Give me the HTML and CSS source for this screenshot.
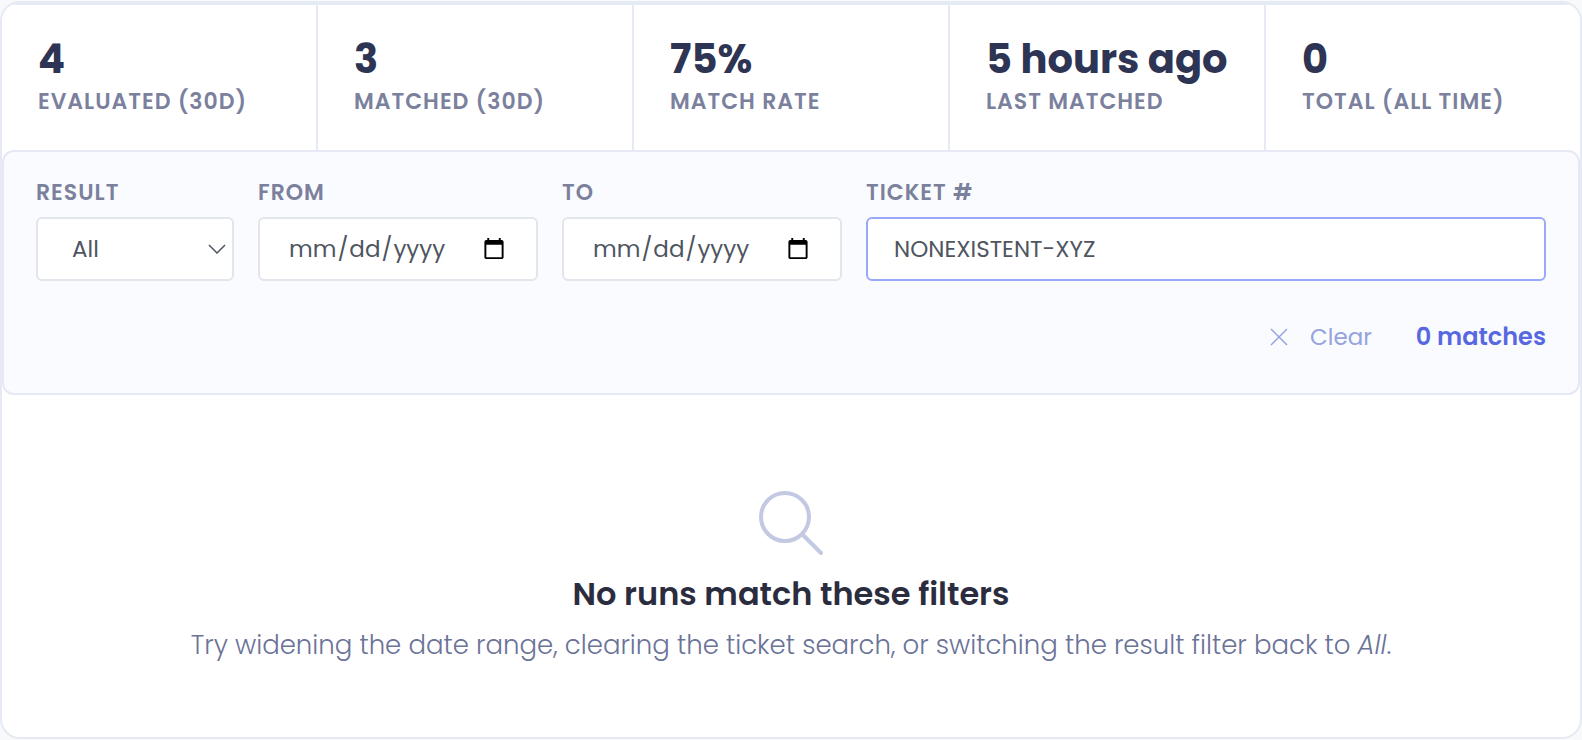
FILE: index.html
```html
<!DOCTYPE html>
<html lang="en">
<head>
<meta charset="utf-8">
<title>Rule runs</title>
<link rel="stylesheet" href="styles.css">
</head>
<body>
<main class="card">
  <dl class="stats">
    <div class="stat"><dd class="stat-value">4</dd><dt class="label">Evaluated (30d)</dt></div>
    <div class="stat"><dd class="stat-value">3</dd><dt class="label">Matched (30d)</dt></div>
    <div class="stat"><dd class="stat-value">75%</dd><dt class="label">Match rate</dt></div>
    <div class="stat"><dd class="stat-value">5 hours ago</dd><dt class="label">Last matched</dt></div>
    <div class="stat"><dd class="stat-value">0</dd><dt class="label">Total (all time)</dt></div>
  </dl>
  <form class="filters">
    <div class="fields">
      <div class="field field-result">
        <label class="label" for="result">Result</label>
        <div class="select-wrap">
          <select class="control select" id="result"><option>All</option><option>Matched</option><option>Not matched</option></select>
          <svg class="chevron" viewBox="0 0 18 10" aria-hidden="true"><path d="M1 1l8 8 8-8"/></svg>
        </div>
      </div>
      <div class="field field-date">
        <label class="label" for="from">From</label>
        <input class="control date" id="from" type="date">
      </div>
      <div class="field field-date">
        <label class="label" for="to">To</label>
        <input class="control date" id="to" type="date">
      </div>
      <div class="field field-ticket">
        <label class="label" for="ticket">Ticket #</label>
        <input class="control ticket" id="ticket" type="text" value="NONEXISTENT-XYZ">
      </div>
    </div>
    <div class="summary">
      <button class="clear" type="button">
        <svg class="clear-icon" viewBox="0 0 18 18" aria-hidden="true"><path d="M1 1l16 16M17 1L1 17"/></svg>
        Clear
      </button>
      <output class="count">0 matches</output>
    </div>
  </form>
  <section class="empty">
    <svg class="empty-icon" viewBox="0 0 64 64" aria-hidden="true"><circle cx="26" cy="26" r="24"/><path d="M43.500 43.500L62 62"/></svg>
    <h2 class="empty-title">No runs match these filters</h2>
    <p class="empty-text">Try widening the date range, clearing the ticket search, or switching the result filter back to <em>All</em>.</p>
  </section>
</main>
</body>
</html>
```
FILE: styles.css
```css
* {
  box-sizing: border-box;
}

body {
  margin: 0;
  padding: 1px 0;
  background: #f8f9fb;
  font-family: Poppins, Inter, "Liberation Sans", sans-serif;
  color: #2b2d42;
}

.card {
  border: 2px solid #e6eaf4;
  border-radius: 20px;
  background: #fff;
  overflow: hidden;
}

.stats {
  display: grid;
  grid-template-columns: repeat(5, 1fr);
  gap: 2px;
  margin: 0;
  padding-top: 2px;
  background: #e6eaf4;
}

.stat {
  display: flex;
  flex-direction: column;
  gap: 4px;
  padding: 32px 0 32px 36px;
  background: #fff;
}

.stat-value {
  margin: 0;
  font-size: 40px;
  line-height: 44px;
  font-weight: 700;
  color: #2d3454;
  white-space: nowrap;
}

.label {
  font-size: 22px;
  line-height: 33px;
  font-weight: 600;
  letter-spacing: 1px;
  text-transform: uppercase;
  white-space: nowrap;
  color: #7b819d;
}

.filters {
  padding: 24px 32px;
  border: 2px solid #e6e8f3;
  border-radius: 12px;
  background: #fafbff;
}

.fields {
  display: flex;
  gap: 24px;
}

.field {
  display: flex;
  flex-direction: column;
  gap: 8px;
  min-width: 0;
}

.field-result {
  flex: 0 0 198px;
}

.field-date {
  flex: 0 0 280px;
}

.field-ticket {
  flex: 1;
}

.control {
  width: 100%;
  height: 64px;
  border: 2px solid #e2e5ec;
  border-radius: 6px;
  background: #fff;
  font: 400 23px Poppins, Inter, "Liberation Sans", sans-serif;
  color: #4f565f;
  outline: none;
}

.select-wrap {
  position: relative;
}

.select {
  appearance: none;
  padding: 0 34px;
}

.chevron {
  position: absolute;
  right: 8px;
  top: 27px;
  width: 18px;
  height: 10px;
  fill: none;
  stroke: #4f565f;
  stroke-width: 1.5;
  pointer-events: none;
}

.date {
  padding: 0 28px;
}

.date::-webkit-calendar-picker-indicator {
  width: 24px;
  height: 24px;
}

.ticket {
  padding: 0 26px;
  border-color: #9aa8fb;
}

.summary {
  display: flex;
  justify-content: flex-end;
  align-items: center;
  gap: 44px;
  padding: 40px 0 16px;
}

.clear {
  display: flex;
  align-items: center;
  gap: 22px;
  padding: 0;
  border: 0;
  background: none;
  font: 400 23px/32px Poppins, Inter, "Liberation Sans", sans-serif;
  color: #96a3de;
}

.clear-icon {
  width: 18px;
  height: 18px;
  fill: none;
  stroke: currentColor;
  stroke-width: 1.5;
}

.count {
  font-size: 24px;
  line-height: 32px;
  font-weight: 600;
  color: #5868e0;
}

.empty {
  display: flex;
  flex-direction: column;
  align-items: center;
  padding: 96px 48px 72px;
  text-align: center;
}

.empty-icon {
  width: 64px;
  height: 64px;
  fill: none;
  stroke: #c3c9e3;
  stroke-width: 4;
  stroke-linecap: round;
}

.empty-title {
  margin: 20px 0 12px;
  font-size: 32px;
  line-height: 38px;
  font-weight: 600;
  color: #2b2d3f;
}

.empty-text {
  margin: 0;
  font-size: 26px;
  line-height: 40px;
  font-weight: 300;
  color: #6b7397;
}
```
